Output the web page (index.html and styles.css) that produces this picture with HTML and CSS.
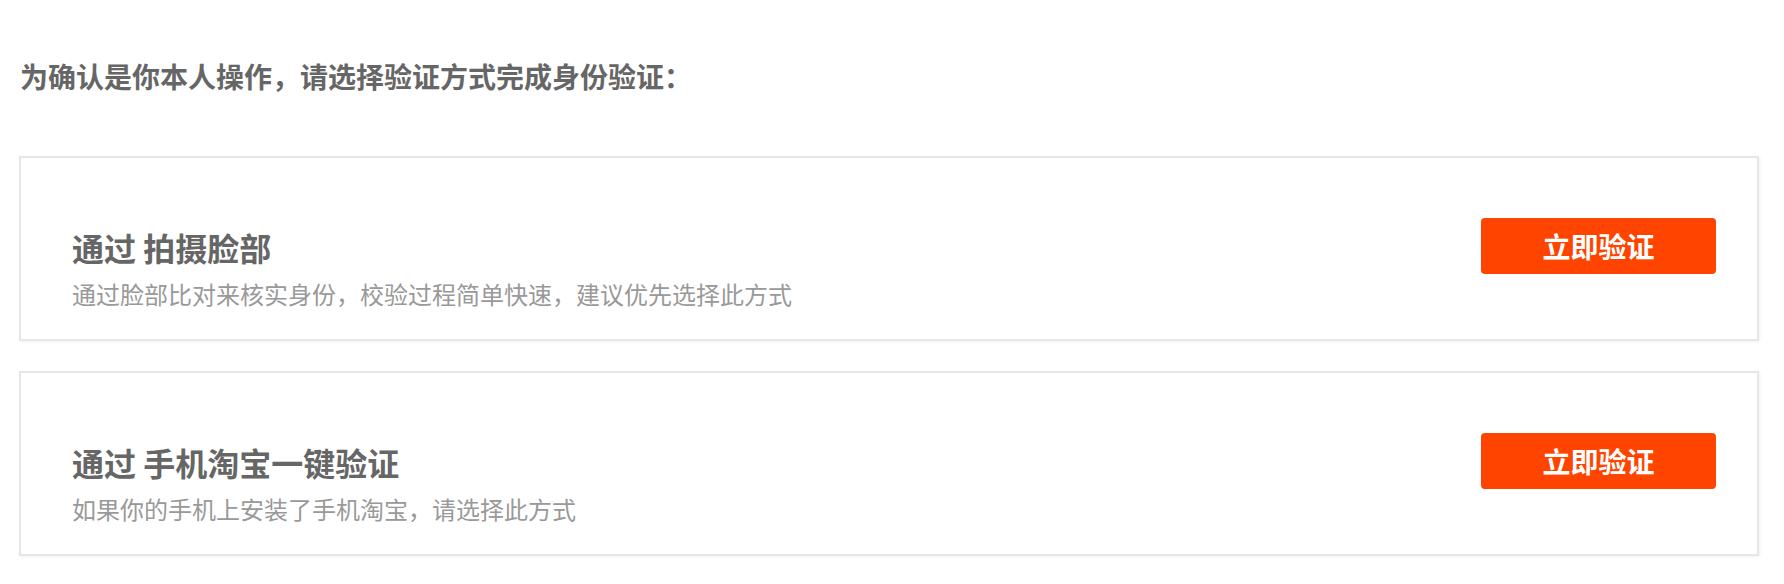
FILE: index.html
```html
<!DOCTYPE html>
<html lang="zh-CN">
<head>
  <meta charset="UTF-8">
  <title>身份验证</title>
  <link rel="stylesheet" href="styles.css">
</head>
<body>
  <h2 class="tip">为确认是你本人操作，请选择验证方式完成身份验证：</h2>

  <div class="way">
    <div class="info">
      <div class="title">通过 拍摄脸部</div>
      <div class="desc">通过脸部比对来核实身份，校验过程简单快速，建议优先选择此方式</div>
    </div>
    <a href="#" class="verify-btn">立即验证</a>
  </div>

  <div class="way">
    <div class="info">
      <div class="title">通过 手机淘宝一键验证</div>
      <div class="desc">如果你的手机上安装了手机淘宝，请选择此方式</div>
    </div>
    <a href="#" class="verify-btn">立即验证</a>
  </div>
</body>
</html>
```

FILE: styles.css
```css
body {
  margin: 0;
  padding: 0 25px 0 19px;
  background: #fff;
  font-family: "Microsoft YaHei", "Noto Sans CJK SC", "Noto Sans", sans-serif;
  color: #666;
}
.tip {
  margin: 56px 0 60px 1px;
  font-size: 28px;
  line-height: 40px;
  font-weight: bold;
  color: #666;
}
.way {
  box-sizing: border-box;
  height: 185px;
  margin-bottom: 30px;
  padding: 0 41px 0 51px;
  display: flex;
  align-items: center;
  justify-content: space-between;
  border: 2px solid #e6e6e6;
  box-shadow: 1px 1px 3px rgba(0,0,0,0.06);
}
.info {
  margin-top: 42px;
}
.title {
  font-size: 32px;
  line-height: 40px;
  font-weight: bold;
  color: #666;
}
.desc {
  margin-top: 9px;
  font-size: 24px;
  line-height: 36px;
  color: #999;
}
.verify-btn {
  display: block;
  width: 235px;
  height: 56px;
  margin-bottom: 5px;
  line-height: 56px;
  text-align: center;
  background: #ff4400;
  border-radius: 4px;
  color: #fff;
  font-size: 28px;
  font-weight: bold;
  text-decoration: none;
}
```
